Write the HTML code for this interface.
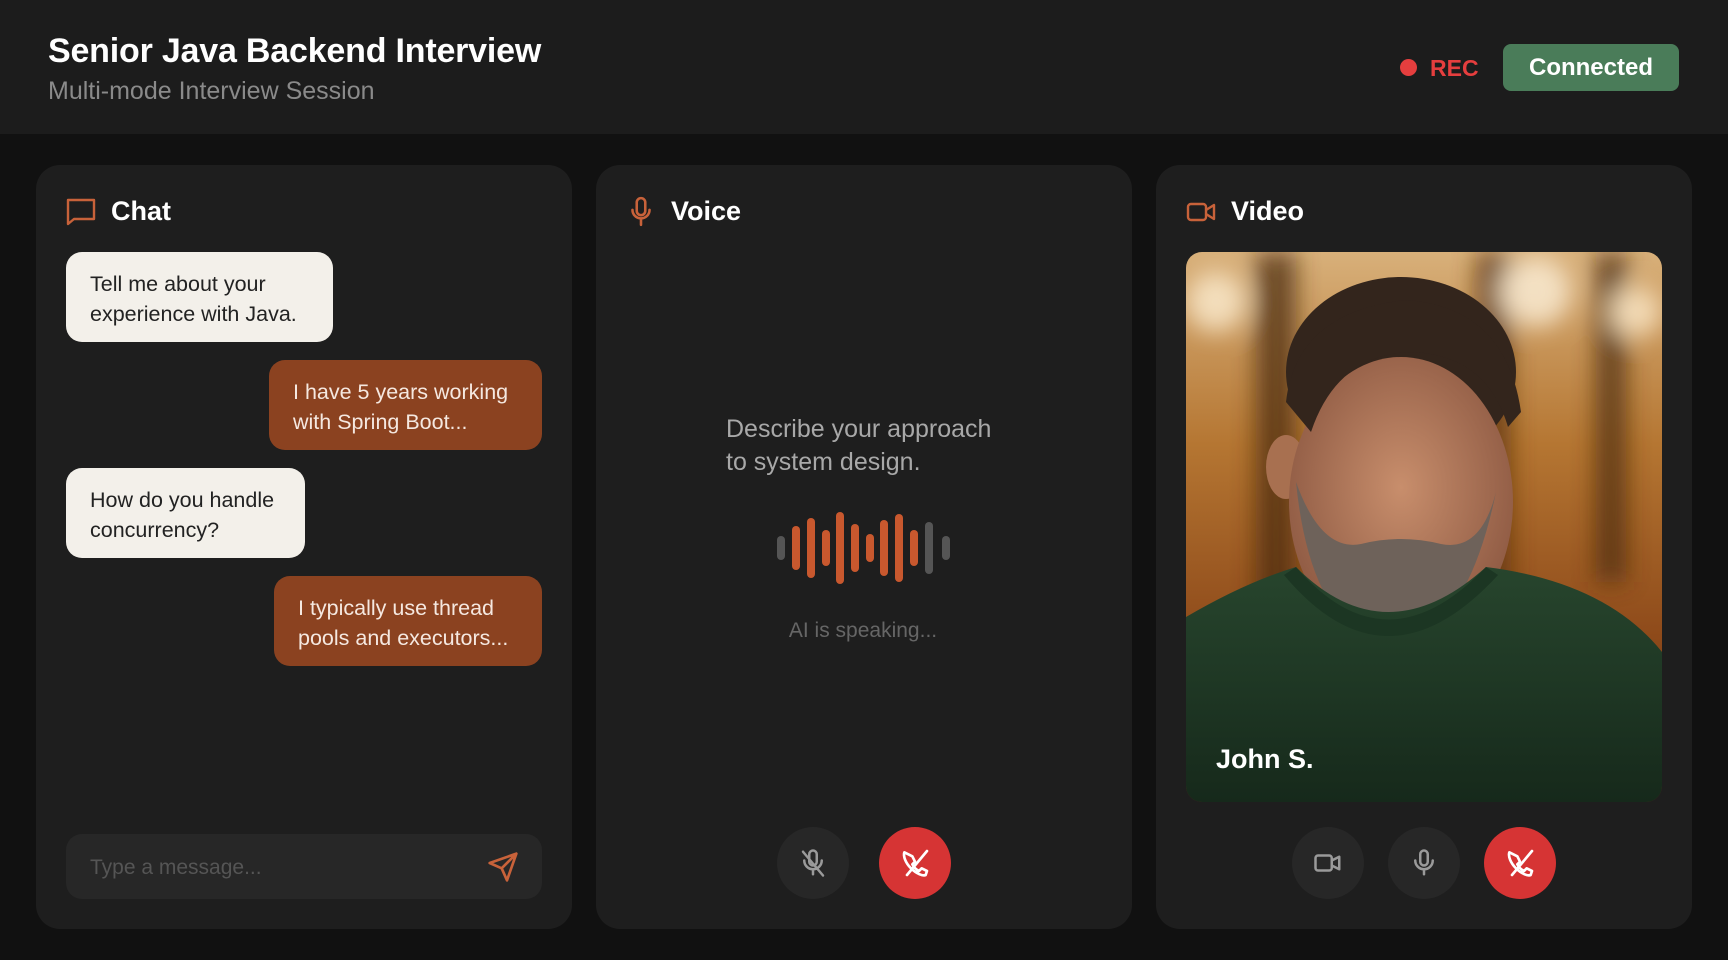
<!DOCTYPE html>
<html><head><meta charset="utf-8"><style>
*{box-sizing:border-box;margin:0;padding:0}
body{width:1728px;height:960px;background:#111111;font-family:"Liberation Sans",sans-serif;position:relative;overflow:hidden;color:#fff}
.hdr{position:absolute;left:0;top:0;width:1728px;height:134px;background:#1c1c1c}
.abs{position:absolute}
.panel{position:absolute;top:165px;width:536px;height:764px;background:#1e1e1e;border-radius:24px}
.ptitle{position:absolute;top:196px;font-size:27px;font-weight:bold;color:#fff}
.bub{position:absolute;font-size:21.5px;line-height:30px;padding:17px 24px 13px;border-radius:16px;white-space:nowrap}
.light{background:#f3f0ea;color:#222}
.dark{background:#8b4220;color:#f5e8e0}
.btn{position:absolute;width:72px;height:72px;border-radius:50%;background:#272727;display:flex;align-items:center;justify-content:center;top:827px}
.red{background:#d63434}
</style></head><body>
<div class="hdr"></div>
<div class="abs" style="left:48px;top:32px;font-size:34px;font-weight:bold;letter-spacing:-0.2px">Senior Java Backend Interview</div>
<div class="abs" style="left:48px;top:77px;font-size:25px;color:#8a8a8a">Multi-mode Interview Session</div>
<div class="abs" style="left:1400px;top:59px;width:17px;height:17px;border-radius:50%;background:#e53e3e"></div>
<div class="abs" style="left:1430px;top:55px;font-size:23px;font-weight:bold;color:#e53e3e">REC</div>
<div class="abs" style="left:1503px;top:44px;width:176px;height:47px;border-radius:8px;background:#4a7c59;font-size:24px;font-weight:bold;text-align:center;line-height:47px">Connected</div>

<div class="panel" style="left:36px"></div>
<div class="panel" style="left:596px"></div>
<div class="panel" style="left:1156px"></div>

<!-- chat -->
<svg class="abs" style="left:66px;top:198px" width="30" height="28" viewBox="0 0 30 28"><path d="M2 2h26v19H8l-6 5z" fill="none" stroke="#c8623a" stroke-width="2.4" stroke-linejoin="round"/></svg>
<div class="ptitle" style="left:111px">Chat</div>
<div class="bub light" style="left:66px;top:252px;width:267px">Tell me about your<br>experience with Java.</div>
<div class="bub dark" style="left:269px;top:360px;width:273px">I have 5 years working<br>with Spring Boot...</div>
<div class="bub light" style="left:66px;top:468px;width:239px">How do you handle<br>concurrency?</div>
<div class="bub dark" style="left:274px;top:576px;width:268px">I typically use thread<br>pools and executors...</div>
<div class="abs" style="left:66px;top:834px;width:476px;height:65px;border-radius:16px;background:#272727"></div>
<div class="abs" style="left:90px;top:856px;font-size:21px;color:#555">Type a message...</div>
<svg class="abs" style="left:487px;top:851px" width="32" height="32" viewBox="0 0 24 24"><path d="M22 2L11 13M22 2l-7 20-4-9-9-4z" fill="none" stroke="#c8623a" stroke-width="2" stroke-linejoin="round" stroke-linecap="round"/></svg>

<!-- voice -->
<svg class="abs" style="left:628px;top:196px" width="26" height="32" viewBox="0 0 24 30"><rect x="8" y="2" width="8" height="16" rx="4" fill="none" stroke="#c8623a" stroke-width="2.4"/><path d="M4 13a8 8 0 0016 0M12 21v6" fill="none" stroke="#c8623a" stroke-width="2.4" stroke-linecap="round"/></svg>
<div class="ptitle" style="left:671px">Voice</div>
<div class="abs" style="left:726px;top:413px;font-size:25px;line-height:33px;color:#a8a8a8">Describe your approach<br>to system design.</div>
<svg class="abs" style="left:776px;top:512px" width="176" height="72" viewBox="0 0 176 72">
<g stroke-linecap="round" stroke-width="8">
<line x1="5" y1="28" x2="5" y2="44" stroke="#555"/>
<line x1="20" y1="18" x2="20" y2="54" stroke="#c8582e"/>
<line x1="35" y1="10" x2="35" y2="62" stroke="#c8582e"/>
<line x1="50" y1="22" x2="50" y2="50" stroke="#c8582e"/>
<line x1="64" y1="4" x2="64" y2="68" stroke="#c8582e"/>
<line x1="79" y1="16" x2="79" y2="56" stroke="#c8582e"/>
<line x1="94" y1="26" x2="94" y2="46" stroke="#c8582e"/>
<line x1="108" y1="12" x2="108" y2="60" stroke="#c8582e"/>
<line x1="123" y1="6" x2="123" y2="66" stroke="#c8582e"/>
<line x1="138" y1="22" x2="138" y2="50" stroke="#c8582e"/>
<line x1="153" y1="14" x2="153" y2="58" stroke="#555"/>
<line x1="170" y1="28" x2="170" y2="44" stroke="#555"/>
</g></svg>
<div class="abs" style="left:743px;top:619px;width:240px;text-align:center;font-size:21px;color:#666">AI is speaking...</div>
<div class="btn" style="left:777px"><svg width="30" height="30" viewBox="0 0 24 24" fill="none" stroke="#9a9a9a" stroke-width="2" stroke-linecap="round"><rect x="9" y="2" width="6" height="12" rx="3"/><path d="M5 10a7 7 0 0014 0M12 17v4M4 3l16 19"/></svg></div>
<div class="btn red" style="left:879px"><svg width="32" height="32" viewBox="0 0 24 24" fill="none" stroke="#fff" stroke-width="2" stroke-linecap="round" stroke-linejoin="round"><path d="M4 4c-1 3 1 8 5 12s9 6 11 5l1-3-4-2-2 2c-2-1-4-3-5-5l2-2-2-4z"/><path d="M21 3L6 21"/></svg></div>

<!-- video -->
<svg class="abs" style="left:1186px;top:201px" width="30" height="22" viewBox="0 0 30 22"><rect x="2" y="3" width="18" height="16" rx="3" fill="none" stroke="#c8623a" stroke-width="2.4"/><path d="M20 9l8-5v14l-8-5" fill="none" stroke="#c8623a" stroke-width="2.4" stroke-linejoin="round"/></svg>
<div class="ptitle" style="left:1231px">Video</div>
<svg class="abs" style="left:1186px;top:252px" width="476" height="550" viewBox="0 0 476 550">
<defs>
<clipPath id="c"><rect width="476" height="550" rx="16"/></clipPath>
<linearGradient id="bg" x1="0" y1="0" x2="0" y2="1"><stop offset="0" stop-color="#d8b07a"/><stop offset=".35" stop-color="#b57632"/><stop offset=".7" stop-color="#8e4a1a"/><stop offset="1" stop-color="#5a2a10"/></linearGradient>
<radialGradient id="sk" cx=".5" cy=".45" r=".6"><stop offset="0" stop-color="#c88e6c"/><stop offset="1" stop-color="#8a5640"/></radialGradient>
<linearGradient id="sw" x1="0" y1="0" x2="0" y2="1"><stop offset="0" stop-color="#27452d"/><stop offset="1" stop-color="#16291b"/></linearGradient>
<filter id="b"><feGaussianBlur stdDeviation="12"/></filter>
</defs>
<g clip-path="url(#c)">
<rect width="476" height="550" fill="url(#bg)"/>
<g filter="url(#b)" opacity=".75">
<rect x="70" y="0" width="40" height="420" fill="#4a2a10"/>
<rect x="290" y="0" width="35" height="350" fill="#5a3010"/>
<rect x="410" y="0" width="30" height="330" fill="#4a2a10"/>
<circle cx="30" cy="50" r="30" fill="#fff2d8"/><circle cx="350" cy="40" r="35" fill="#fff4e0"/><circle cx="450" cy="60" r="25" fill="#ffeed0"/>
</g>
<ellipse cx="215" cy="120" rx="115" ry="95" fill="#33251c"/>
<ellipse cx="100" cy="215" rx="20" ry="32" fill="#a87050"/>
<ellipse cx="215" cy="250" rx="112" ry="145" fill="url(#sk)"/>
<path d="M100 150 Q110 60 220 48 Q320 55 335 160 L322 175 Q300 100 220 100 Q150 105 125 180z" fill="#33251c"/>
<path d="M110 230 Q125 380 205 395 Q280 385 310 240 Q295 300 255 292 Q215 282 175 292 Q135 300 110 230z" fill="#6e625a"/>
<path d="M0 365 Q60 330 110 315 Q200 405 300 315 Q420 330 476 400 L476 550 L0 550z" fill="url(#sw)"/>
<path d="M110 315 Q200 420 300 315 L312 323 Q200 445 98 323z" fill="#1c3623"/>
</g></svg>
<div class="abs" style="left:1216px;top:744px;font-size:27px;font-weight:bold;color:#fff">John S.</div>
<div class="btn" style="left:1292px"><svg width="30" height="30" viewBox="0 0 24 24" fill="none" stroke="#9a9a9a" stroke-width="2" stroke-linejoin="round"><rect x="2" y="6" width="13" height="12" rx="2"/><path d="M15 10l6-3v10l-6-3"/></svg></div>
<div class="btn" style="left:1388px"><svg width="30" height="30" viewBox="0 0 24 24" fill="none" stroke="#9a9a9a" stroke-width="2" stroke-linecap="round"><rect x="9" y="2" width="6" height="12" rx="3"/><path d="M5 10a7 7 0 0014 0M12 17v4"/></svg></div>
<div class="btn red" style="left:1484px"><svg width="32" height="32" viewBox="0 0 24 24" fill="none" stroke="#fff" stroke-width="2" stroke-linecap="round" stroke-linejoin="round"><path d="M4 4c-1 3 1 8 5 12s9 6 11 5l1-3-4-2-2 2c-2-1-4-3-5-5l2-2-2-4z"/><path d="M21 3L6 21"/></svg></div>
</body></html>
